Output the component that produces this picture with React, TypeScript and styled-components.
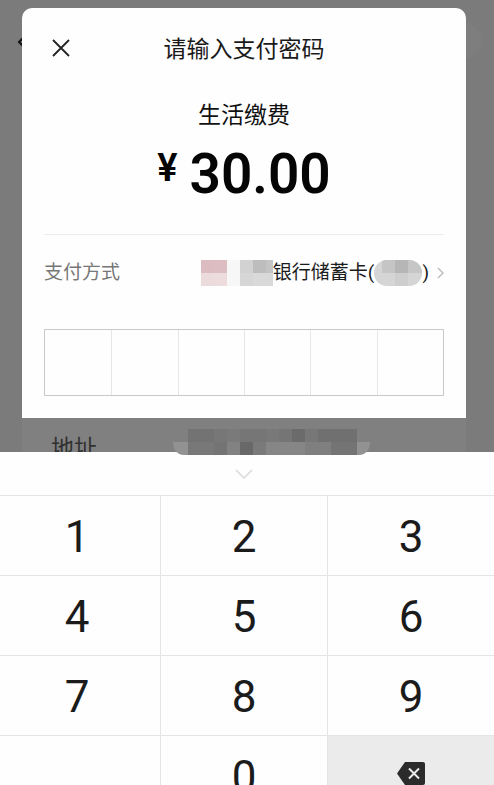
import React from "react";
import styled, { createGlobalStyle, css } from "styled-components";

const GlobalStyle = createGlobalStyle`
  *, *::before, *::after { box-sizing: border-box; }
  html, body { margin: 0; padding: 0; }
  body {
    background: #7b7b7b;
    color: #1a1a1a;
    font-family: Roboto, "Noto Sans CJK SC", sans-serif;
    overflow: hidden;
  }
  button { border: 0; padding: 0; background: none; color: inherit; font: inherit; cursor: pointer; }
  svg { display: block; flex: none; }
`;

const Screen = styled.div`
  position: relative;
  display: flex;
  flex-direction: column;
  height: 100vh;
  padding-top: 8px;
  overflow: hidden;
`;

const BackButton = styled.button`
  position: absolute;
  left: 17px;
  top: 36px;
  width: 12px;
  height: 12px;
  color: #111;
`;

const RoundShade = styled.div`
  position: absolute;
  right: 12px;
  top: 24px;
  width: 34px;
  height: 34px;
  border-radius: 50%;
  background: #7e7e7e;
`;

const Dialog = styled.section`
  position: relative;
  flex: none;
  margin: 0 28px 0 22px;
  padding: 0 22px 22px;
  border-radius: 10px 10px 0 0;
  background: #fefefe;
`;

const Header = styled.header`
  display: grid;
  grid-template-columns: 34px 1fr 34px;
  align-items: center;
  height: 80px;
`;

const CloseButton = styled.button`
  display: grid;
  place-items: center;
  width: 34px;
  height: 34px;
`;

const Title = styled.h1`
  margin: 0;
  padding-top: 4px;
  font-size: 23px;
  line-height: 34px;
  font-weight: 400;
  text-align: center;
  white-space: nowrap;
`;

const Payee = styled.p`
  margin: 0;
  padding-top: 10px;
  font-size: 23px;
  line-height: 36px;
  text-align: center;
  color: #111;
`;

const Amount = styled.p`
  display: flex;
  justify-content: center;
  align-items: flex-start;
  gap: 12px;
  margin: 0;
  height: 101px;
  padding-top: 10px;
  border-bottom: 1px solid #ececec;
  color: #050505;
  font-weight: 600;
  font-size: 55px;
  line-height: 60px;
`;

const Currency = styled.span`
  font-size: 38px;
  line-height: 48px;
  font-weight: 600;
`;

const MethodRow = styled.div`
  display: flex;
  justify-content: space-between;
  align-items: center;
  height: 76px;
  font-size: 19px;
  line-height: 28px;
`;

const MethodLabel = styled.span`
  color: #777;
`;

const MethodButton = styled.button`
  display: flex;
  align-items: center;
  color: #1c1c1c;
`;

const Chevron = styled.svg`
  margin-left: 8px;
`;

const PinField = styled.fieldset`
  display: grid;
  grid-template-columns: repeat(6, 1fr);
  min-width: 0;
  height: 67px;
  margin: 18px 0 0;
  padding: 0;
  border: 1px solid #c9c9c9;
`;

const PinDigit = styled.input`
  width: 100%;
  min-width: 0;
  height: 100%;
  padding: 0;
  border: 0;
  border-radius: 0;
  outline: none;
  background: transparent;
  text-align: center;
  font-size: 24px;
  & + & { border-left: 1px solid #e6e6e6; }
`;

const Underlay = styled.div`
  position: relative;
  flex: none;
  height: 34px;
  margin: 0 28px 0 22px;
  padding: 14px 0 0 29px;
  overflow: hidden;
  background: #808080;
  color: #303030;
  font-size: 23px;
  line-height: 34px;
`;

const AddressMask = styled.svg`
  position: absolute;
  left: 50%;
  top: 429px;
  margin-left: -74px;
  z-index: 1;
`;

const Keypad = styled.div`
  flex: none;
  background: #fefefe;
`;

const CollapseButton = styled.button`
  display: grid;
  place-items: center;
  width: 100%;
  height: 43px;
  padding-right: 6px;
`;

const Keys = styled.div`
  display: grid;
  grid-template-columns: 160fr 167fr 167fr;
  grid-auto-rows: 80px;
`;

const keyFrame = css`
  border-top: 1px solid #e4e4e4;
  &:not(:nth-child(3n + 1)) { border-left: 1px solid #e4e4e4; }
  &:nth-child(3n + 1) { padding-right: 6px; }
`;

const Key = styled.button<{ $shaded?: boolean }>`
  ${keyFrame}
  display: grid;
  place-items: center;
  padding-top: ${(p) => (p.$shaded ? "0" : "2px")};
  padding-bottom: ${(p) => (p.$shaded ? "4px" : "0")};
  background: ${(p) => (p.$shaded ? "#ebebeb" : "transparent")};
  color: #1b1b1b;
  font-size: 44px;
  line-height: 52px;
`;

const EmptyKey = styled.div`
  ${keyFrame}
`;

type Cell = [x: number, y: number, w: number, h: number, fill: string];

const bankCells: Cell[] = [
  [0, 0, 13, 13, "#dcbcc0"],
  [13, 0, 13, 13, "#dcbdc1"],
  [0, 13, 13, 13, "#ecdbdd"],
  [13, 13, 13, 13, "#eddcde"],
  [26, 0, 13, 26, "#f8f7f8"],
  [39, 0, 13, 13, "#d2d2d2"],
  [52, 0, 13, 13, "#bdbdbd"],
  [65, 0, 7, 13, "#c4c4c4"],
  [39, 13, 13, 13, "#d6d6d6"],
  [52, 13, 20, 13, "#d9d9d9"],
];

const tailCells: Cell[] = [
  [0, 0, 48, 26, "#d5d5d5"],
  [8, 0, 13, 13, "#c5c5c5"],
  [21, 0, 13, 13, "#b6b6b6"],
  [34, 0, 14, 13, "#c6c6c6"],
  [21, 13, 13, 13, "#cecece"],
];

const addressCells: Cell[] = [
  [15, 0, 26, 13, "#737373"],
  [41, 0, 13, 13, "#777777"],
  [54, 0, 13, 13, "#7a7a7a"],
  [67, 0, 26, 13, "#767676"],
  [93, 0, 13, 13, "#797979"],
  [106, 0, 13, 13, "#757575"],
  [119, 0, 13, 13, "#6b6b6b"],
  [132, 0, 13, 13, "#777777"],
  [145, 0, 39, 13, "#707070"],
  [15, 13, 26, 13, "#787878"],
  [41, 13, 13, 13, "#747474"],
  [54, 13, 13, 13, "#828282"],
  [67, 13, 13, 13, "#686868"],
  [80, 13, 13, 13, "#7a7a7a"],
  [93, 13, 39, 13, "#868686"],
  [132, 13, 26, 13, "#7f7f7f"],
  [158, 13, 26, 13, "#747474"],
];

const Cells = ({ cells }: { cells: Cell[] }) => (
  <>
    {cells.map(([x, y, width, height, fill]) => (
      <rect key={`${x}-${y}`} x={x} y={y} width={width} height={height} fill={fill} />
    ))}
  </>
);

const digits = ["1", "2", "3", "4", "5", "6", "7", "8", "9"];

export default function App() {
  return (
    <>
      <GlobalStyle />
      <Screen>
        <BackButton aria-label="返回">
          <svg width="12" height="12" viewBox="0 0 12 12" fill="none" stroke="currentColor" strokeWidth="2">
            <path d="M7 1 2 6l5 5" />
          </svg>
        </BackButton>
        <RoundShade />
        <Dialog role="dialog" aria-labelledby="pay-title">
          <Header>
            <CloseButton aria-label="关闭">
              <svg width="18" height="18" viewBox="0 0 18 18" fill="none" stroke="#222" strokeWidth="1.8">
                <path d="M1 1l16 16M17 1 1 17" />
              </svg>
            </CloseButton>
            <Title id="pay-title">请输入支付密码</Title>
          </Header>
          <Payee>生活缴费</Payee>
          <Amount>
            <Currency>¥</Currency>
            <span>30.00</span>
          </Amount>
          <MethodRow>
            <MethodLabel id="method-label">支付方式</MethodLabel>
            <MethodButton aria-describedby="method-label">
              <svg width="72" height="26" viewBox="0 0 72 26" shapeRendering="crispEdges" aria-hidden="true">
                <Cells cells={bankCells} />
              </svg>
              <span>银行储蓄卡(</span>
              <svg width="48" height="26" viewBox="0 0 48 26" aria-hidden="true">
                <clipPath id="tail-shape">
                  <rect width="48" height="26" rx="13" />
                </clipPath>
                <g clipPath="url(#tail-shape)">
                  <Cells cells={tailCells} />
                </g>
              </svg>
              <span>)</span>
              <Chevron width="7" height="12" viewBox="0 0 7 12" fill="none" stroke="#bdbdbd" strokeWidth="1.5">
                <path d="M1 1l5 5-5 5" />
              </Chevron>
            </MethodButton>
          </MethodRow>
          <PinField aria-label="支付密码">
            {[1, 2, 3, 4, 5, 6].map((n) => (
              <PinDigit key={n} type="password" inputMode="none" maxLength={1} aria-label={`第${n}位`} />
            ))}
          </PinField>
        </Dialog>
        <Underlay>地址</Underlay>
        <AddressMask width="197" height="26" viewBox="0 0 197 26" aria-hidden="true">
          <path d="M0 13h197c0 7-4 13-11 13H11C4 26 0 20 0 13Z" fill="#929292" />
          <Cells cells={addressCells} />
        </AddressMask>
        <Keypad>
          <CollapseButton aria-label="收起键盘">
            <svg width="18" height="10" viewBox="0 0 18 10" fill="none" stroke="#dadada" strokeWidth="1.5">
              <path d="M1 1l8 8 8-8" />
            </svg>
          </CollapseButton>
          <Keys>
            {digits.map((d) => (
              <Key key={d}>{d}</Key>
            ))}
            <EmptyKey />
            <Key>0</Key>
            <Key $shaded aria-label="删除">
              <svg width="28" height="23" viewBox="0 0 28 23">
                <path d="M8 0h18q2 0 2 2v19q0 2-2 2H8L0 11.5Z" fill="#2b2b2b" />
                <path d="M12 6.5l10 10M22 6.5l-10 10" stroke="#ebebeb" strokeWidth="2" />
              </svg>
            </Key>
          </Keys>
        </Keypad>
      </Screen>
    </>
  );
}
